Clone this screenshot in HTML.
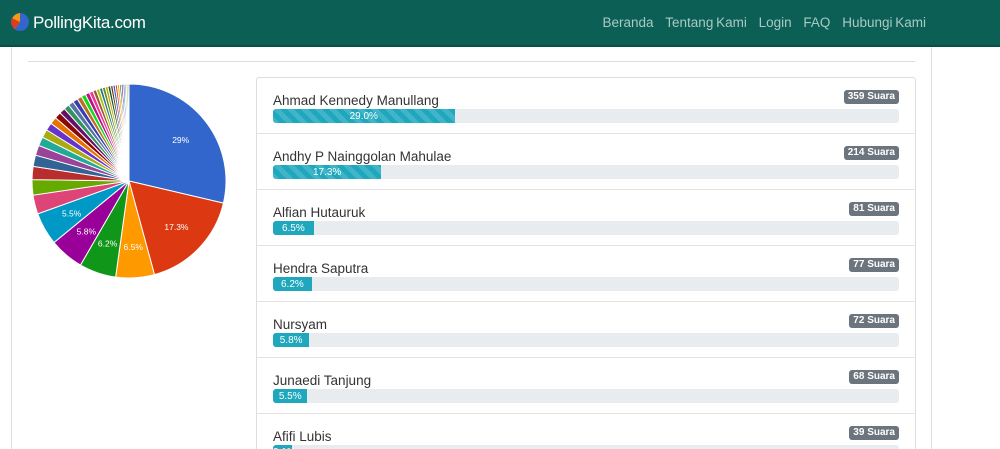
<!DOCTYPE html>
<html style="overflow:hidden;height:449px"><head><meta charset="utf-8"><style>
body{margin:0;width:1000px;height:449px;overflow:hidden;background:#fff;font-family:"Liberation Sans",sans-serif;position:relative}
.nav{position:absolute;left:0;top:0;width:1000px;height:45px;background:#0b5f54;border-bottom:2px solid #0a4f46;z-index:5}
.brand{position:absolute;left:33px;top:13px;color:#fff;font-size:17px;letter-spacing:-0.3px}
.logo{position:absolute;left:10px;top:12px}
.links{position:absolute;right:74px;top:15px;color:#a9c9c3;font-size:13.5px;word-spacing:-1px}
.links span{margin-left:9px}
.card{position:absolute;left:11px;top:40px;width:919px;height:420px;border:1px solid #ddd;border-top:none;border-bottom:none}
.hr{position:absolute;left:28px;top:61px;width:887px;border-top:1px solid #ddd}
.list{position:absolute;left:256px;top:77px;width:658px;border:1px solid #ddd;border-radius:3px}
.row{height:55px;border-bottom:1px solid #e3e3e3;position:relative}
.name{position:absolute;left:16px;top:15px;font-size:13.5px;color:#333}
.badge{position:absolute;right:16px;top:12px;background:#6c757d;color:#fff;font-size:10px;font-weight:bold;padding:1px 4px;border-radius:3px;line-height:12px}
.bar{position:absolute;left:16px;right:16px;top:31px;height:14px;background:#e9ecef;border-radius:3px;overflow:hidden}
.fill{height:14px;background:#1fa8bd;color:#fff;font-size:10px;text-align:center;line-height:15px;background-image:linear-gradient(45deg,rgba(255,255,255,.15) 25%,transparent 25%,transparent 50%,rgba(255,255,255,.15) 50%,rgba(255,255,255,.15) 75%,transparent 75%);background-size:14px 14px}
</style></head><body>
<div class="nav">
<svg class="logo" width="20" height="20" viewBox="0 0 20 20"><circle cx="10" cy="10" r="9" fill="#3366cc"/><path d="M10 10V1A9 9 0 0 0 5 17Z" fill="#f39c12"/><path d="M10 10L5 17A9 9 0 0 1 2 6Z" fill="#e03c1c"/></svg>
<div class="brand">PollingKita.com</div>
<div class="links"><span>Beranda</span> <span>Tentang Kami</span> <span>Login</span> <span>FAQ</span> <span>Hubungi Kami</span></div>
</div>
<div class="card"></div>
<div class="hr"></div>
<svg id="pie" style="position:absolute;left:31px;top:83px" width="196" height="196" viewBox="0 0 196 196"></svg>
<div class="list">
<div class="row"><div class="name">Ahmad Kennedy Manullang</div><div class="badge">359 Suara</div><div class="bar"><div class="fill" style="width:29%">29.0%</div></div></div>
<div class="row"><div class="name">Andhy P Nainggolan Mahulae</div><div class="badge">214 Suara</div><div class="bar"><div class="fill" style="width:17.3%">17.3%</div></div></div>
<div class="row"><div class="name">Alfian Hutauruk</div><div class="badge">81 Suara</div><div class="bar"><div class="fill" style="width:6.5%;background-image:none">6.5%</div></div></div>
<div class="row"><div class="name">Hendra Saputra</div><div class="badge">77 Suara</div><div class="bar"><div class="fill" style="width:6.2%;background-image:none">6.2%</div></div></div>
<div class="row"><div class="name">Nursyam</div><div class="badge">72 Suara</div><div class="bar"><div class="fill" style="width:5.8%;background-image:none">5.8%</div></div></div>
<div class="row"><div class="name">Junaedi Tanjung</div><div class="badge">68 Suara</div><div class="bar"><div class="fill" style="width:5.5%;background-image:none">5.5%</div></div></div>
<div class="row"><div class="name">Afifi Lubis</div><div class="badge">39 Suara</div><div class="bar"><div class="fill" style="width:3.1%;background-image:none">3.1%</div></div></div>
</div>
<script>
var v=[29,17.3,6.5,6.2,5.8,5.5,3.2,2.6,2.2,1.9,1.7,1.5,1.4,1.3,1.2,1.1,1,0.95,0.9,0.85,0.8,0.75,0.7,0.65,0.6,0.55,0.5,0.5,0.45,0.45,0.4,0.4,0.35,0.35,0.3,0.3,0.3,0.25,0.25,0.2];
var s=v.reduce((a,b)=>a+b,0);
var c=["#3366cc","#dc3912","#ff9900","#109618","#990099","#0099c6","#dd4477","#66aa00","#b82e2e","#316395","#994499","#22aa99","#aaaa11","#6633cc","#e67300","#8b0707","#651067","#329262","#5574a6","#3b3eac","#b77322","#16d620","#b91383","#f4359e","#9c5935","#a9c413","#2a778d","#668d1c","#bea413","#0c5922","#743411"];
var h="",a=-Math.PI/2,cx=98,cy=98,r=97;
v.forEach((x,i)=>{var b=a+x/s*2*Math.PI;var l=(b-a)>Math.PI?1:0;
h+='<path d="M'+cx+' '+cy+'L'+(cx+r*Math.cos(a))+' '+(cy+r*Math.sin(a))+'A'+r+' '+r+' 0 '+l+' 1 '+(cx+r*Math.cos(b))+' '+(cy+r*Math.sin(b))+'Z" fill="'+c[i%c.length]+'" stroke="#fff" stroke-width="1"/>';
if(i<6){var m=(a+b)/2,t=r*0.68;h+='<text x="'+(cx+t*Math.cos(m))+'" y="'+(cy+t*Math.sin(m)+3)+'" fill="#fff" font-size="8.5" text-anchor="middle" font-family="Liberation Sans">'+(i==0?"29%":x+"%")+'</text>';}
a=b;});
document.getElementById("pie").innerHTML=h;
</script>
</body></html>
